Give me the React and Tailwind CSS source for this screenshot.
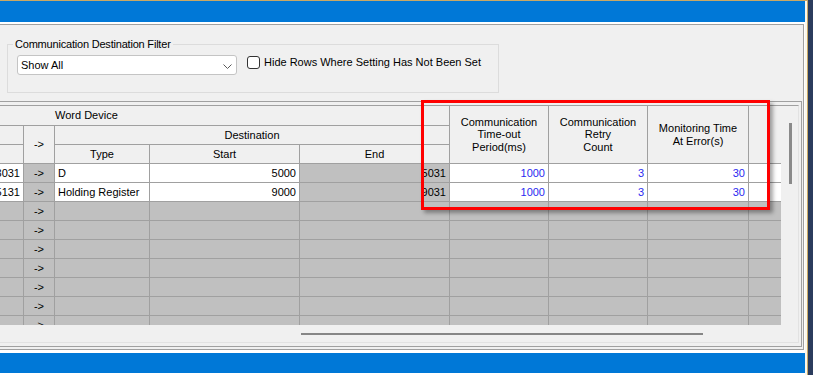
const rows = [
  { src: "3031", type: "D", start: "5000", end: "5031", timeout: "1000", retry: "3", monitor: "30" },
  { src: "5131", type: "Holding Register", start: "9000", end: "9031", timeout: "1000", retry: "3", monitor: "30" },
]

const emptyRows = 7

function FilterGroup() {
  return (
    <div className="relative ml-[7px] mt-[19px] h-[49px] w-[492px] border border-[#dcdcdc] pl-[9px] pt-[10px]">
      <span className="absolute -top-[7px] left-[5px] bg-[#f0f0f0] px-[2px] leading-[13px] tracking-[-0.2px]">
        Communication Destination Filter
      </span>
      <div className="flex items-start">
        <div className="flex h-[20px] w-[220px] items-center justify-between rounded-[3px] border border-[#c4c4c4] bg-white pl-[3px] pr-[4px]">
          <span>Show All</span>
          <svg width="9" height="5" viewBox="0 0 9 5" className="mt-[2px]">
            <path d="M0.5 0.5 L4.5 4.5 L8.5 0.5" fill="none" stroke="#5a5a5a" strokeWidth="1" />
          </svg>
        </div>
        <div className="ml-[10px] mt-[1px] flex items-center">
          <div className="h-[13px] w-[13px] rounded-[3px] border border-[#333333] bg-white" />
          <span className="ml-[4px] leading-[13px]">Hide Rows Where Setting Has Not Been Set</span>
        </div>
      </div>
    </div>
  )
}

function DataGrid() {
  const head = "flex items-center justify-center bg-[#f0f0f0] text-center"
  const cell = "flex items-center overflow-hidden whitespace-nowrap"
  return (
    <div className="grid h-[219px] w-[781px] grid-cols-[23px_30px_94px_149px_149px_98px_98px_100px_32px] grid-rows-[19px_18px_18px] auto-rows-[18px] gap-px overflow-hidden bg-[#a0a0a0]">
      {/* header */}
      <div className="col-span-5 col-start-1 row-start-1 flex items-center bg-[#f0f0f0] pl-[55px]">Word Device</div>
      <div className={`col-start-6 row-span-3 row-start-1 leading-[12.5px] ${head}`}>
        Communication<br />Time-out<br />Period(ms)
      </div>
      <div className={`col-start-7 row-span-3 row-start-1 leading-[12.5px] ${head}`}>
        Communication<br />Retry<br />Count
      </div>
      <div className={`col-start-8 row-span-3 row-start-1 leading-[12.5px] ${head}`}>
        Monitoring Time<br />At Error(s)
      </div>
      <div className="col-start-9 row-span-3 row-start-1 bg-[#f0f0f0]" />
      <div className="col-start-1 row-start-2 bg-[#f0f0f0]" />
      <div className={`col-start-2 row-span-2 row-start-2 ${head}`}>-&gt;</div>
      <div className={`col-span-3 col-start-3 row-start-2 ${head}`}>Destination</div>
      <div className="col-start-1 row-start-3 bg-[#f0f0f0]" />
      <div className={`col-start-3 row-start-3 ${head}`}>Type</div>
      <div className={`col-start-4 row-start-3 ${head}`}>Start</div>
      <div className={`col-start-5 row-start-3 ${head}`}>End</div>

      {/* set rows */}
      {rows.map((r, i) => (
        <div key={i} className="contents">
          <div className={`${cell} justify-end bg-white pr-[3px]`}>{r.src}</div>
          <div className={`${cell} justify-center bg-[#c0c0c0]`}>-&gt;</div>
          <div className={`${cell} bg-white pl-[3px]`}>{r.type}</div>
          <div className={`${cell} justify-end bg-white pr-[3px]`}>{r.start}</div>
          <div className={`${cell} justify-end bg-[#c0c0c0] pr-[3px]`}>{r.end}</div>
          <div className={`${cell} justify-end bg-white pr-[3px] text-[#2a2af0]`}>{r.timeout}</div>
          <div className={`${cell} justify-end bg-white pr-[3px] text-[#2a2af0]`}>{r.retry}</div>
          <div className={`${cell} justify-end bg-white pr-[3px] text-[#2a2af0]`}>{r.monitor}</div>
          <div className="bg-white" />
        </div>
      ))}

      {/* unset rows */}
      {Array.from({ length: emptyRows }).map((_, i) => (
        <div key={i} className="contents">
          <div className="bg-[#c0c0c0]" />
          <div className={`${cell} justify-center bg-[#c0c0c0]`}>-&gt;</div>
          <div className="bg-[#c0c0c0]" />
          <div className="bg-[#c0c0c0]" />
          <div className="bg-[#c0c0c0]" />
          <div className="bg-[#c0c0c0]" />
          <div className="bg-[#c0c0c0]" />
          <div className="bg-[#c0c0c0]" />
          <div className="bg-[#c0c0c0]" />
        </div>
      ))}
    </div>
  )
}

function Panel() {
  return (
    <div className="flex h-[326px] w-[804px] flex-col border-t border-r border-b border-[#a0a0a0] bg-[#f0f0f0]">
      <div className="h-[76px]">
        <FilterGroup />
      </div>
      {/* grid frame */}
      <div className="mb-[2px] h-[246px] w-[802px] border-t border-r border-b border-[#a0a0a0] pt-[3px] pr-[2px] pb-[3px]">
        <div className="flex h-[238px] w-[799px] flex-col border-t border-r border-b border-t-[#a0a0a0] border-r-[#e2e2e2] border-b-[#e2e2e2]">
          <div className="flex">
            <DataGrid />
            <div className="w-[17px]">
              <div className="ml-[8px] mt-[17px] h-[61px] w-[3px] bg-[#8a8a8a]" />
            </div>
          </div>
          <div className="h-[17px]">
            <div className="ml-[301px] mt-[8px] h-[2px] w-[402px] bg-[#868686]" />
          </div>
        </div>
      </div>
    </div>
  )
}

export default function App() {
  return (
    <div className="relative flex h-[375px] w-[813px] overflow-hidden bg-[#2b3c5d] font-['Liberation_Sans',Arial,sans-serif] text-[11px] text-black">
      <div className="flex w-[808px] border-t border-r border-[#c9a865] bg-[#fbf7ea]">
        <div className="flex w-[805px] flex-col bg-white">
          <div className="h-[21px] bg-[#0078d7]" />
          <div className="h-[2px]" />
          <Panel />
          <div className="h-[3px]" />
          <div className="h-[20px] bg-[#0078d7]" />
        </div>
      </div>

      {/* highlight box drawn over the grid */}
      <div className="absolute left-[421px] top-[100px] h-[110px] w-[349px] border-[3px] border-[#ff0000] shadow-[3px_3px_4px_rgba(0,0,0,0.35)]" />
    </div>
  )
}
